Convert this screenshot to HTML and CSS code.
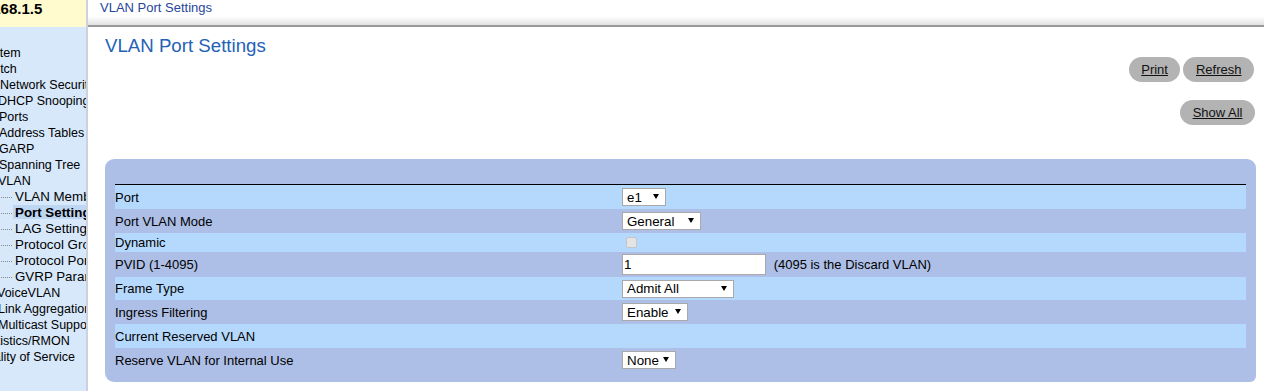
FILE: index.html
```html
<!DOCTYPE html>
<html lang="en">
<head>
    <meta charset="UTF-8">
    <meta name="viewport" content="width=device-width, initial-scale=1.0">
    <title>VLAN Port Settings</title>
    <link rel="stylesheet" href="styles.css">
</head>
<body>
    <div class="frame">
        <div class="left">
            <div class="host">192.168.1.5</div>
            <ul class="tree">
                <li class="cut-sys">System</li>
                <li class="cut-sw">Switch</li>
                <li>Network Security</li>
                <li class="cut-2">DHCP Snooping</li>
                <li class="cut-1">Ports</li>
                <li class="cut-1">Address Tables</li>
                <li class="cut-1">GARP</li>
                <li class="cut-1">Spanning Tree</li>
                <li class="cut-2">VLAN</li>
                <li class="sub">VLAN Membership</li>
                <li class="sub selected"><span>Port Settings</span></li>
                <li class="sub">LAG Settings</li>
                <li class="sub">Protocol Group</li>
                <li class="sub">Protocol Port</li>
                <li class="sub">GVRP Parameters</li>
                <li class="cut-3">VoiceVLAN</li>
                <li class="cut-2">Link Aggregation</li>
                <li class="cut-2">Multicast Support</li>
                <li class="cut-stat">Statistics/RMON</li>
                <li class="cut-qos">Quality of Service</li>
            </ul>
        </div>
        <div class="right">
            <div class="topbar">VLAN Port Settings</div>
            <div class="content">
                <h1>VLAN Port Settings</h1>
                <div class="actions">
                    <a href="#" class="pill">Print</a>
                    <a href="#" class="pill">Refresh</a>
                </div>
                <div class="actions second">
                    <a href="#" class="pill">Show All</a>
                </div>

                <div class="panel">
                    <table>
                        <tr class="light">
                            <td class="label">Port</td>
                            <td class="value">
                                <span class="dropdown">
                                    <select class="w-port"><option>e1</option></select>
                                </span>
                            </td>
                        </tr>
                        <tr>
                            <td class="label">Port VLAN Mode</td>
                            <td class="value">
                                <span class="dropdown">
                                    <select class="w-mode"><option>General</option></select>
                                </span>
                            </td>
                        </tr>
                        <tr class="light short">
                            <td class="label">Dynamic</td>
                            <td class="value"><input type="checkbox" class="check" disabled></td>
                        </tr>
                        <tr class="tall">
                            <td class="label">PVID (1-4095)</td>
                            <td class="value">
                                <input type="text" class="pvid" value="1">
                                <span class="note">(4095 is the Discard VLAN)</span>
                            </td>
                        </tr>
                        <tr class="light frame-row">
                            <td class="label">Frame Type</td>
                            <td class="value">
                                <span class="dropdown">
                                    <select class="w-frame"><option>Admit All</option></select>
                                </span>
                            </td>
                        </tr>
                        <tr>
                            <td class="label">Ingress Filtering</td>
                            <td class="value">
                                <span class="dropdown">
                                    <select class="w-ingress"><option>Enable</option></select>
                                </span>
                            </td>
                        </tr>
                        <tr class="light">
                            <td class="label">Current Reserved VLAN</td>
                            <td class="value"></td>
                        </tr>
                        <tr>
                            <td class="label">Reserve VLAN for Internal Use</td>
                            <td class="value">
                                <span class="dropdown">
                                    <select class="w-none"><option>None</option></select>
                                </span>
                            </td>
                        </tr>
                    </table>
                </div>
            </div>
        </div>
    </div>
</body>
</html>
```

FILE: styles.css
```css
body {
    margin: 0;
    font-family: "Liberation Sans", Arial, sans-serif;
    font-size: 13px;
    color: #000;
    background-color: #fff;
    height: 391px;
    overflow: hidden;
}

.frame {
    display: flex;
    height: 391px;
}

/* left frame: host + tree */
.left {
    width: 86px;
    flex-shrink: 0;
    display: flex;
    flex-direction: column;
    border-right: 2px solid #c9d2de;
    overflow: hidden;
}

.host {
    height: 27px;
    background-color: #fffbcf;
    font-size: 15px;
    font-weight: bold;
    line-height: 17px;
    white-space: nowrap;
    text-indent: -37px;
    overflow: hidden;
}

.tree {
    flex: 1;
    list-style: none;
    margin: 0;
    padding: 18px 0 0 0;
    background-color: #d7e8fa;
    font-size: 12.5px;
    line-height: 16px;
    white-space: nowrap;
    overflow: hidden;
}

.tree li {
    height: 16px;
}

.cut-sys { text-indent: -21px; }
.cut-sw { text-indent: -20px; }
.cut-stat { text-indent: -22px; }
.cut-qos { text-indent: -23px; }
.cut-1 { text-indent: -1px; }
.cut-2 { text-indent: -2px; }
.cut-3 { text-indent: -3px; }

.tree .sub {
    font-size: 13.33px;
}

.tree .sub::before {
    content: "";
    display: inline-block;
    width: 11px;
    margin: 0 3px 0 1px;
    border-top: 1px dotted #8a8a8a;
    vertical-align: middle;
}

.tree .selected {
    font-weight: bold;
}

.tree .selected span {
    display: inline-block;
    width: 80px;
    margin-left: -2px;
    padding-left: 2px;
    height: 14px;
    line-height: 16px;
    background-color: #bdd6f2;
}

/* right frame */
.right {
    flex: 1;
    display: flex;
    flex-direction: column;
}

.topbar {
    height: 25px;
    padding-left: 12px;
    line-height: 15px;
    color: #27469c;
    background: linear-gradient(#fff 65%, #e2e2e2);
    border-bottom: 2px solid #999;
    white-space: nowrap;
}

.content {
    flex: 1;
    padding: 0 8px 0 17px;
}

.content h1 {
    margin: 8px 0 0 0;
    font-size: 18.67px;
    font-weight: normal;
    line-height: 21px;
    color: #2462b5;
}

.actions {
    display: flex;
    justify-content: flex-end;
    gap: 3px;
    margin: 1px 2px 0 0;
}

.actions.second {
    margin-top: 18px;
    margin-right: 1px;
}

.pill {
    display: inline-block;
    height: 25px;
    line-height: 25px;
    padding: 0 12.5px;
    border-radius: 13px;
    background-color: #b3b3b3;
    color: #111;
    text-decoration: underline;
}

.panel {
    margin-top: 34px;
    padding: 25px 10px 10px 10px;
    background-color: #adbfe6;
    border-radius: 9px 9px 6px 9px;
}

.panel table {
    width: 100%;
    border-collapse: collapse;
    border-top: 1px solid #000;
}

.panel td {
    height: 24px;
    padding: 0;
    vertical-align: middle;
    white-space: nowrap;
}

.panel td.label {
    width: 506px;
}

.panel td.value {
    padding-left: 1px;
}

.panel tr.light {
    background-color: #b5d9fd;
}

.panel tr.short td { height: 19px; }
.panel tr.tall td { height: 25px; }
.panel tr.frame-row td { height: 23px; }

.dropdown {
    position: relative;
    display: inline-block;
    vertical-align: middle;
    line-height: 0;
}

.dropdown::after {
    content: "";
    position: absolute;
    right: 7px;
    top: 6px;
    border-left: 3px solid transparent;
    border-right: 3px solid transparent;
    border-top: 5px solid #000;
}

select {
    appearance: none;
    -webkit-appearance: none;
    box-sizing: border-box;
    height: 18px;
    margin: 0;
    padding: 0 0 0 4px;
    border: 1px solid #a9a9a9;
    border-radius: 0;
    background-color: #fff;
    font-family: "Liberation Sans", Arial, sans-serif;
    font-size: 13.33px;
    color: #000;
}

.w-port { width: 44px; }
.w-mode { width: 79px; }
.w-frame { width: 112px; }
.w-ingress { width: 66px; }
.w-none { width: 54px; }

.check {
    appearance: none;
    -webkit-appearance: none;
    box-sizing: border-box;
    width: 11px;
    height: 11px;
    margin: 4px 0 4px 4px;
    border: 1px solid #c4c4c4;
    border-radius: 2px;
    background-color: #e4e4e4;
    vertical-align: middle;
}

.pvid {
    box-sizing: border-box;
    width: 144px;
    height: 21px;
    margin: 0;
    padding: 0 1px;
    border: 1px solid #a9a9a9;
    font-family: "Liberation Sans", Arial, sans-serif;
    font-size: 13.33px;
    vertical-align: middle;
}

.note {
    margin-left: 4px;
    vertical-align: middle;
}
```
